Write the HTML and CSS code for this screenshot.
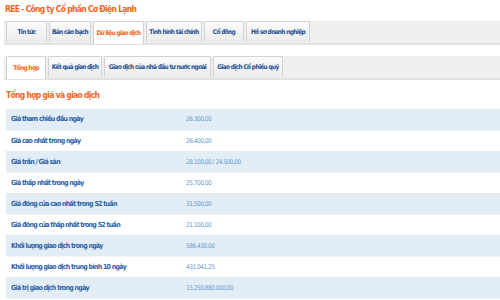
FILE: index.html
```html
<!DOCTYPE html>
<html>
<head>
	<meta charset="utf-8" />
	<title>REE - Dữ liệu giao dịch</title>
	<link rel="stylesheet" href="styles.css">
</head>
<body>
	<h1 class="company">REE - Công ty Cổ phần Cơ Điện Lạnh</h1>
	<ul class="tabs main-tabs">
		<li>Tin tức</li>
		<li>Bản cáo bạch</li>
		<li class="active">Dữ liệu giao dịch</li>
		<li>Tình hình tài chính</li>
		<li>Cổ đông</li>
		<li>Hồ sơ doanh nghiệp</li>
	</ul>
	<ul class="tabs sub-tabs">
		<li class="active">Tổng hợp</li>
		<li>Kết quả giao dịch</li>
		<li>Giao dịch của nhà đầu tư nước ngoài</li>
		<li>Giao dịch Cổ phiếu quỹ</li>
	</ul>
	<h2 class="section-title">Tổng hợp giá và giao dịch</h2>
	<table class="summary">
		<tr><td class="label">Giá tham chiếu đầu ngày</td><td class="value">26.300,00</td></tr>
		<tr><td class="label">Giá cao nhất trong ngày</td><td class="value">26.400,00</td></tr>
		<tr><td class="label">Giá trần / Giá sàn</td><td class="value">28.100,00 / 24.500,00</td></tr>
		<tr><td class="label">Giá thấp nhất trong ngày</td><td class="value">25.700,00</td></tr>
		<tr><td class="label">Giá đóng cửa cao nhất trong 52 tuần</td><td class="value">31.500,00</td></tr>
		<tr><td class="label">Giá đóng cửa thấp nhất trong 52 tuần</td><td class="value">21.100,00</td></tr>
		<tr><td class="label">Khối lượng giao dịch trong ngày</td><td class="value">586.430,00</td></tr>
		<tr><td class="label">Khối lượng giao dịch trung bình 10 ngày</td><td class="value">431.041,25</td></tr>
		<tr><td class="label">Giá trị giao dịch trong ngày</td><td class="value">15.250.880.000,00</td></tr>
	</table>
</body>
</html>
```

FILE: styles.css
```css
body{
	margin: 0;
	background-color: #fff;
	font-family: "DejaVu Sans Condensed", "Liberation Sans", sans-serif;
	font-stretch: condensed;
	color: #333;
}
ul,li{
	margin: 0;
	padding: 0;
	list-style: none;
}
.company{
	margin: 0;
	padding: 4px 5px 0;
	height: 17px;
	font-size: 8.5px;
	letter-spacing: -0.7px;
	font-weight: bold;
	color: #f26522;
}
.tabs{
	display: flex;
	gap: 2px;
	margin-left: 4px;
	padding: 0 2px;
	height: 22px;
	background-color: #efefef;
	border-bottom: 2px solid #e2e2e2;
}
.tabs li{
	display: flex;
	align-items: center;
	justify-content: center;
	box-sizing: border-box;
	flex: none;
	height: 21px;
	background: linear-gradient(#fbfbfb, #ececec);
	border: 1px solid #d2d2d2;
	border-bottom: none;
	border-radius: 2px 2px 0 0;
	font-size: 6.5px;
	letter-spacing: -0.65px;
	font-weight: bold;
	color: #1d4f91;
	white-space: nowrap;
}
.tabs li.active{
	background: #fff;
	color: #f26522;
	height: 23px;
}
.main-tabs li:nth-child(1){ width: 41px; }
.main-tabs li:nth-child(2){ width: 42px; }
.main-tabs li:nth-child(3){ width: 51px; }
.main-tabs li:nth-child(4){ width: 56px; }
.main-tabs li:nth-child(5){ width: 40px; }
.main-tabs li:nth-child(6){ width: 64px; }
.sub-tabs{
	margin-top: 11px;
}
.sub-tabs li:nth-child(1){ width: 40px; }
.sub-tabs li:nth-child(2){ width: 54px; }
.sub-tabs li:nth-child(3){ width: 107px; }
.sub-tabs li:nth-child(4){ width: 70px; }
.section-title{
	margin: 0;
	padding: 10px 6px 0;
	height: 19px;
	font-size: 8.5px;
	letter-spacing: -0.7px;
	font-weight: bold;
	color: #f26522;
}
.summary{
	margin-left: 6px;
	width: 494px;
	border-collapse: collapse;
	font-size: 6.5px;
}
.summary tr{
	height: 21px;
	background-color: #e3edf5;
	border-bottom: 1px solid #f3f6f8;
}
.summary tr:nth-child(even){
	background-color: #fff;
	border-bottom: 1px solid #e3e9ee;
}
.summary td{
	padding: 0;
}
.summary .label{
	width: 175px;
	padding-left: 5px;
	font-size: 7px;
	font-weight: bold;
	letter-spacing: -0.7px;
	color: #2a62a8;
}
.summary .value{
	letter-spacing: -0.5px;
	color: #6a9dd2;
}
```
